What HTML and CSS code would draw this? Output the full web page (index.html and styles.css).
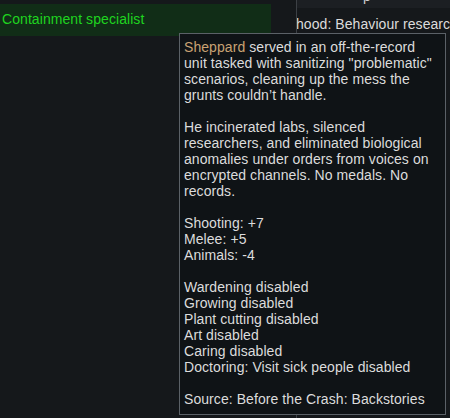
FILE: index.html
```html
<!DOCTYPE html>
<html>
<head>
<meta charset="utf-8">
<link rel="stylesheet" href="styles.css">
</head>
<body>
<div class="screen">
  <div class="left">
    <div class="trait">Containment specialist</div>
  </div>
  <div class="right">
    <div class="topbar"><span class="cut">p</span></div>
    <div class="child">hood: Behaviour research</div>
  </div>
  <div class="tooltip">
    <p><span class="name">Sheppard</span> served in an off-the-record unit tasked with sanitizing "problematic" scenarios, cleaning up the mess the grunts couldn’t handle.</p>
    <p>He incinerated labs, silenced researchers, and eliminated biological anomalies under orders from voices on encrypted channels. No medals. No records.</p>
    <p>Shooting: +7<br>Melee: +5<br>Animals: -4</p>
    <p>Wardening disabled<br>Growing disabled<br>Plant cutting disabled<br>Art disabled<br>Caring disabled<br>Doctoring: Visit sick people disabled</p>
    <p>Source: Before the Crash: Backstories</p>
  </div>
</div>
</body>
</html>
```
FILE: styles.css
```css
html, body {
  margin: 0;
  padding: 0;
  background: #15181b;
}
.screen {
  position: relative;
  width: 450px;
  height: 418px;
  overflow: hidden;
  display: flex;
  font-family: "Liberation Sans", Arial, sans-serif;
  font-size: 14px;
  line-height: 16px;
  letter-spacing: 0.07px;
  color: #dcdcdc;
}
.left {
  width: 296px;
  flex: none;
  padding-top: 4px;
}
.trait {
  width: 269px;
  height: 32px;
  padding-left: 2px;
  background: #112d17;
  color: #1fd41f;
  line-height: 30px;
}
.right {
  flex: 1;
  border-left: 1px solid #3c4045;
  overflow: hidden;
  white-space: nowrap;
}
.topbar {
  height: 8px;
  background: #1c1f23;
  overflow: hidden;
}
.cut {
  display: block;
  margin-top: -12px;
  color: #cfcfcf;
  padding-left: 66px;
}
.child {
  margin-top: 8px;
  margin-left: -1px;
  color: #dcdcdc;
}
.tooltip {
  position: absolute;
  left: 179px;
  top: 33px;
  width: 255px;
  height: 372px;
  padding: 5px 6px 3px 4px;
  background: #0f1316;
  border: 1px solid #5b6167;
}
.tooltip p {
  margin: 0 0 16px 0;
}
.name {
  color: #c9a273;
}
```
